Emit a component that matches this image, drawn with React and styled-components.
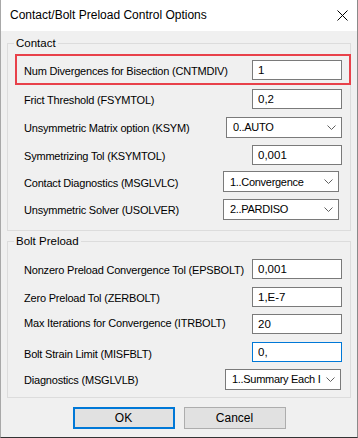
import styled, { createGlobalStyle } from 'styled-components';

const GlobalStyle = createGlobalStyle`
  html, body {
    margin: 0;
    padding: 0;
    background: #f0f0f0;
  }
  * {
    box-sizing: border-box;
  }
`;

const Window = styled.div`
  width: 358px;
  height: 438px;
  display: flex;
  flex-direction: column;
  background: #f0f0f0;
  border-left: 1px solid #a8a8a8;
  border-right: 1px solid #8a8a8a;
  border-bottom: 1px solid #333;
  font-family: "Liberation Sans", Arial, sans-serif;
  font-size: 11px;
  color: #000;
`;

const TitleBar = styled.div`
  height: 31px;
  flex: none;
  background: #fff;
  display: flex;
  align-items: center;
  justify-content: space-between;
  padding: 0 9px 1px 9px;
`;

const Title = styled.span`
  font-size: 12px;
`;

const Body = styled.div`
  flex: 1;
  padding: 4px 6px 0 6px;
  display: flex;
  flex-direction: column;
`;

const Group = styled.fieldset`
  margin: 0;
  margin-top: ${p => p.$gap || 0}px;
  border: 1px solid #dcdcdc;
  padding: ${p => p.$pad || '0 0 7px 0'};
  min-width: 0;
`;

const Legend = styled.legend`
  margin-left: 6px;
  padding: 0 2px;
  line-height: 16px;
  font-size: 11.5px;
`;

const Rows = styled.div`
  display: flex;
  flex-direction: column;
`;

const Highlight = styled.div`
  margin: 3px -1px 0 7px;
  height: 31px;
  border: 2px solid #e8414a;
  display: flex;
  flex-direction: column;
  justify-content: center;
`;

const Row = styled.div`
  height: ${p => p.$h || 28}px;
  display: flex;
  align-items: center;
  padding: 0 ${p => p.$right || 8}px 0 ${p => p.$left || 16}px;
`;

const Label = styled.span`
  white-space: nowrap;
  letter-spacing: -0.2px;
  position: relative;
  top: ${p => p.$shift || 1}px;
`;

const TextBox = styled.input`
  flex: none;
  margin-left: auto;
  width: 90px;
  height: 20px;
  border: 1px solid ${p => (p.$focus ? '#0078d7' : '#7a7a7a')};
  background: #fff;
  padding: 0 0 0 5px;
  font-family: inherit;
  font-size: 11.5px;
  color: #000;
  outline: none;
`;

const Select = styled.div`
  flex: none;
  margin-left: auto;
  width: 116px;
  height: 21px;
  border: 1px solid #7a7a7a;
  background: #fff;
  display: flex;
  align-items: center;
  padding: 0 5px 0 6px;
  gap: 1px;
  overflow: hidden;
`;

const SelectText = styled.span`
  flex: 1;
  min-width: 0;
  white-space: nowrap;
  letter-spacing: -0.3px;
  overflow: hidden;
  text-overflow: clip;
`;

const Footer = styled.div`
  display: flex;
  justify-content: center;
  gap: 9px;
  padding-top: 9px;
`;

const Button = styled.button`
  width: 102px;
  height: 22px;
  background: #e1e1e1;
  border: ${p => (p.$default ? '2px solid #0078d7' : '1px solid #adadad')};
  font-family: inherit;
  font-size: 12px;
  color: #000;
  padding: 0;
`;

const Chevron = () => (
  <svg width="9" height="5" viewBox="0 0 9 5" style={{ flex: 'none' }}>
    <path d="M0.5 0.5 L4.5 4.5 L8.5 0.5" fill="none" stroke="#606060" strokeWidth="1" />
  </svg>
);

const CloseIcon = () => (
  <svg width="11" height="11" viewBox="0 0 11 11">
    <path d="M0.5 0.5 L10.5 10.5 M10.5 0.5 L0.5 10.5" stroke="#000" strokeWidth="1" />
  </svg>
);

const Dropdown = ({ value, right }) => (
  <Select style={right ? { marginRight: right } : undefined}>
    <SelectText>{value}</SelectText>
    <Chevron />
  </Select>
);

const contactRows = [
  { label: 'Frict Threshold (FSYMTOL)', kind: 'text', value: '0,2', h: 28 },
  { label: 'Unsymmetric Matrix option (KSYM)', kind: 'select', value: '0..AUTO', h: 28 },
  { label: 'Symmetrizing Tol (KSYMTOL)', kind: 'text', value: '0,001', h: 27 },
  { label: 'Contact Diagnostics (MSGLVLC)', kind: 'select', value: '1..Convergence', h: 27, right: 3 },
  { label: 'Unsymmetric Solver (USOLVER)', kind: 'select', value: '2..PARDISO', h: 28, right: 3 },
];

const boltRows = [
  { label: 'Nonzero Preload Convergence Tol (EPSBOLT)', kind: 'text', value: '0,001', h: 28 },
  { label: 'Zero Preload Tol (ZERBOLT)', kind: 'text', value: '1,E-7', h: 27 },
  { label: 'Max Iterations for Convergence (ITRBOLT)', kind: 'text', value: '20', h: 28, shift: -1 },
  { label: 'Bolt Strain Limit (MISFBLT)', kind: 'text', value: '0,', h: 27, focus: true, shift: 2 },
  { label: 'Diagnostics (MSGLVLB)', kind: 'select', value: '1..Summary Each I', h: 28, right: 1 },
];

const renderRow = (r) => (
  <Row key={r.label} $h={r.h}>
    <Label $shift={r.shift}>{r.label}</Label>
    {r.kind === 'text' ? (
      <TextBox readOnly value={r.value} $focus={r.focus} />
    ) : (
      <Dropdown value={r.value} right={r.right} />
    )}
  </Row>
);

export default function App() {
  return (
    <>
      <GlobalStyle />
      <Window>
        <TitleBar>
          <Title>Contact/Bolt Preload Control Options</Title>
          <CloseIcon />
        </TitleBar>
        <Body>
          <Group>
            <Legend>Contact</Legend>
            <Rows>
              <Highlight>
                <Row $h={27} $left={7} $right={7}>
                  <Label>Num Divergences for Bisection (CNTMDIV)</Label>
                  <TextBox readOnly value="1" />
                </Row>
              </Highlight>
              {contactRows.map(renderRow)}
            </Rows>
          </Group>
          <Group $gap={2} $pad="6px 0 4px 0">
            <Legend>Bolt Preload</Legend>
            <Rows>{boltRows.map(renderRow)}</Rows>
          </Group>
          <Footer>
            <Button $default>OK</Button>
            <Button>Cancel</Button>
          </Footer>
        </Body>
      </Window>
    </>
  );
}
